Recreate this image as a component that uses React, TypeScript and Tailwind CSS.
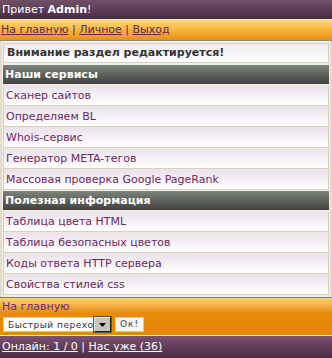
import React from "react";

const font = { fontFamily: '"DejaVu Sans", Verdana, sans-serif' };

function Row({ children }: { children: React.ReactNode }) {
  return (
    <div className="h-[19px] border-x border-[#d6cebf] bg-gradient-to-b from-[#ebe2eb] to-[#ffffff] px-[2px] text-[11px] leading-[19px] text-[#6b2a5e] mb-[2px] shadow-[0_1px_0_#d8d0c0,0_-1px_0_#ece6da]">
      {children}
    </div>
  );
}

function Head({ children }: { children: React.ReactNode }) {
  return (
    <div className="h-[19px] bg-gradient-to-b from-[#7e847c] to-[#404140] px-[2px] text-[11px] font-bold leading-[19px] text-white mb-[2px]">
      {children}
    </div>
  );
}

export default function App() {
  return (
    <div className="w-[332px] h-[358px] overflow-hidden bg-[#f6f2ea]" style={font}>
      <div className="h-[19px] bg-gradient-to-b from-[#715069] to-[#4a2a44] px-[2px] text-[11px] leading-[19px] text-white">
        Привет <b>Admin</b>!
      </div>
      <div className="h-[1px] bg-[#fff1c8]" />
      <div className="h-[21px] bg-gradient-to-b from-[#ffd77a] via-[#f7b43a] to-[#ea9010] px-[1px] text-[11px] leading-[20px] text-[#5b2a55] border-b border-[#8a8a8a]">
        <a className="underline">На главную</a> | <a className="underline">Личное</a> | <a className="underline">Выход</a>
      </div>
      <div className="border-x-[2px] border-[#e3dccb] bg-[#f4efe6] px-[1px] pt-[2px] h-[256px]">
        <div className="h-[20px] border border-[#d6cebf] bg-gradient-to-b from-[#efeaf0] to-[#ffffff] px-[3px] text-[11px] font-bold leading-[18px] text-[#333333] mb-[2px]">
          Внимание раздел редактируется!
        </div>
        <Head>Наши сервисы</Head>
        <Row>Сканер сайтов</Row>
        <Row>Определяем BL</Row>
        <Row>Whois-сервис</Row>
        <Row>Генератор META-тегов</Row>
        <Row>Массовая проверка Google PageRank</Row>
        <Head>Полезная информация</Head>
        <Row>Таблица цвета HTML</Row>
        <Row>Таблица безопасных цветов</Row>
        <Row>Коды ответа HTTP сервера</Row>
        <Row>Свойства стилей css</Row>
      </div>
      <div className="h-[38px] border-t border-[#7a7a82] bg-gradient-to-b from-[#ffd36a] via-[#e88b08] via-40% to-[#e48806] px-[2px]">
        <div className="text-[11px] leading-[17px] text-[#6a2a78]">На главную</div>
        <div className="flex items-start gap-[1px] mt-[2px] ml-[1px]">
          <div className="flex h-[15px] w-[109px] items-center border border-[#c8c8c8] bg-white">
            <span className="flex-1 overflow-hidden whitespace-nowrap pl-[4px] text-[9px] leading-[12px] text-[#333] tracking-[0.5px]">Быстрый переход</span>
            <span className="flex h-[15px] w-[17px] shrink-0 items-center justify-center border border-t-[#e8e8e8] border-l-[#e8e8e8] border-r-[#202020] border-b-[#202020] bg-[#c8c4bc] outline outline-1 outline-[#555]">
              <svg width="7" height="4" viewBox="0 0 7 4"><path d="M0 0h7L3.5 4z" fill="#000" /></svg>
            </span>
          </div>
          <div className="ml-[2px] flex h-[15px] items-center border border-[#c8c8c8] bg-[#f6f6f6] px-[4px] text-[9px] text-[#444] tracking-[1px]">Ок!</div>
        </div>
      </div>
      <div className="h-[1px] bg-[#f8e6c6]" />
      <div className="h-[22px] bg-gradient-to-b from-[#7c5172] to-[#4a2a44] px-[2px] text-[11px] leading-[21px] text-white">
        <a className="underline">Онлайн: 1 / 0</a> | <a className="underline">Нас уже (36)</a>
      </div>
    </div>
  );
}
